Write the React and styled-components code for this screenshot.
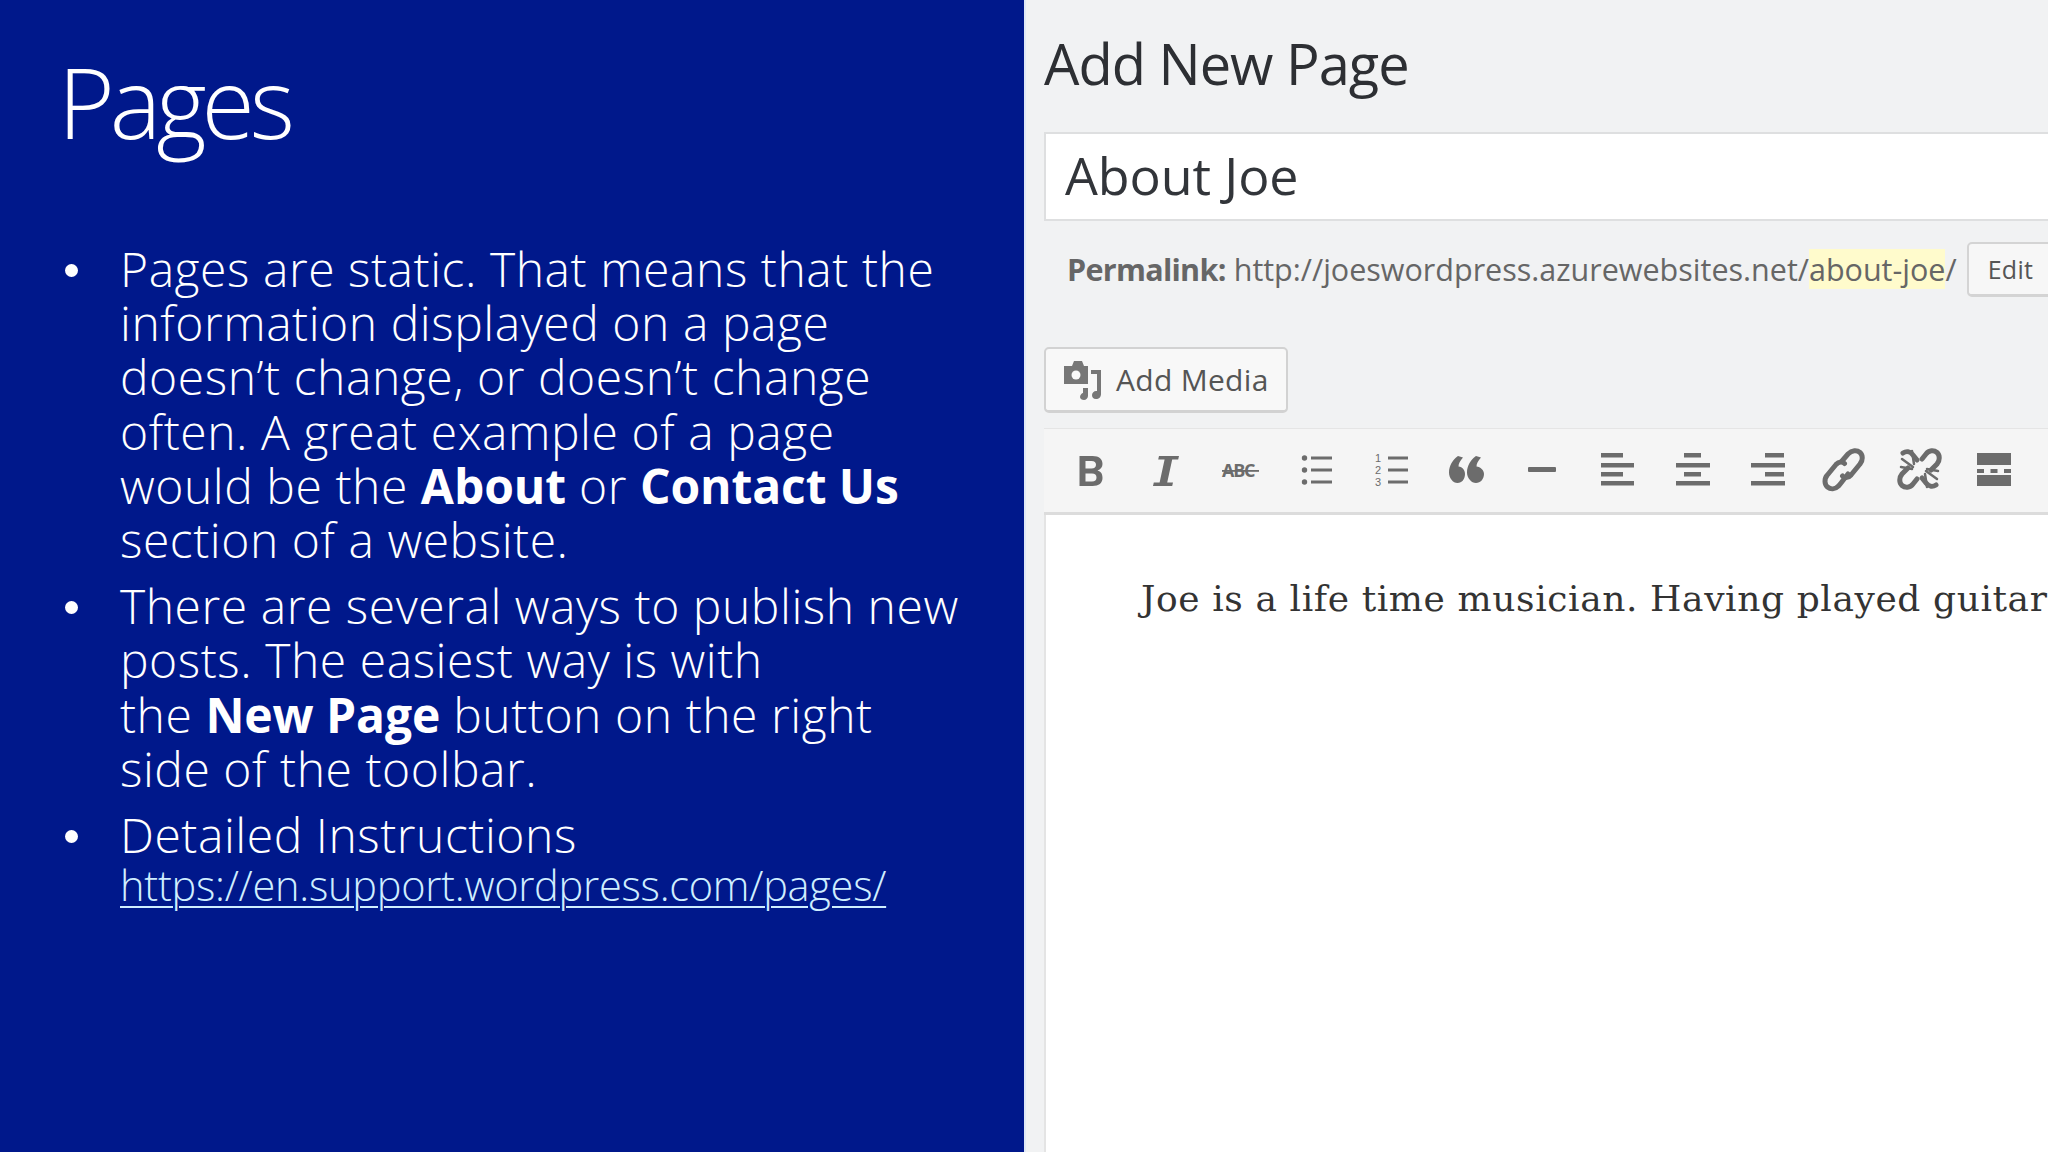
import React from "react";
import styled, { createGlobalStyle } from "styled-components";

const Global = createGlobalStyle`
  html, body { margin: 0; padding: 0; background: #f1f2f3; }
  #root { width: 2048px; height: 1152px; overflow: hidden; }
`;

const Page = styled.div`
  display: grid;
  grid-template-columns: 1024px 1024px;
  width: 2048px;
  height: 1152px;
  overflow: hidden;
`;

const Slide = styled.section`
  background: #00188b;
  color: #fff;
  padding: 39px 0 0 60px;
  font-family: "Open Sans", "Noto Sans", sans-serif;
  overflow: hidden;
`;

const SlideTitle = styled.h1`
  margin: 0 0 0 -2px;
  font-size: 97px;
  line-height: 124px;
  font-weight: 300;
  letter-spacing: -5px;
`;

const Bullets = styled.ul`
  list-style: none;
  margin: 79px 0 0;
  padding: 0;
  display: flex;
  flex-direction: column;
  gap: 12px;
`;

const Bullet = styled.li`
  position: relative;
  padding-left: 60px;
  font-size: 48px;
  line-height: 54.2px;
  font-weight: 300;
  letter-spacing: 0.55px;
  white-space: nowrap;
  &::before {
    content: "";
    position: absolute;
    left: 5px;
    top: 22px;
    width: 13px;
    height: 13px;
    border-radius: 50%;
    background: #fff;
  }
  strong { font-weight: 700; letter-spacing: -0.1px; }
`;

const SlideLink = styled.a`
  display: block;
  margin-top: -4px;
  font-size: 41.5px;
  line-height: 54px;
  color: #cfeeff;
  letter-spacing: -0.25px;
  text-decoration: underline;
  text-decoration-thickness: 2px;
  text-underline-offset: 5px;
`;

const Editor = styled.section`
  position: relative;
  background: #f1f2f3;
  border-left: 2px solid #dfe8f6;
  padding-left: 18px;
  font-family: "Open Sans", "Noto Sans", sans-serif;
  display: flex;
  flex-direction: column;
  overflow: hidden;
`;

const Heading = styled.h2`
  margin: 26px 0 0;
  font-size: 56px;
  line-height: 74px;
  font-weight: 400;
  color: #2d2f33;
  letter-spacing: -1px;
  white-space: nowrap;
`;

const TitleField = styled.div`
  margin-top: 32px;
  height: 85px;
  background: #fff;
  border: 2px solid #dedfe0;
  border-right: 0;
  padding-left: 19px;
  font-size: 52px;
  line-height: 82px;
  color: #32353a;
  letter-spacing: -0.1px;
  white-space: nowrap;
`;

const PermalinkRow = styled.div`
  display: flex;
  align-items: center;
  margin-top: 20px;
  padding-left: 23px;
  height: 56px;
  font-size: 30.5px;
  color: #666;
  letter-spacing: 0;
  white-space: nowrap;
  b { font-weight: 700; margin-right: 8px; letter-spacing: -0.7px; }
`;

const Slug = styled.span`
  background: #fffbcc;
  line-height: 40px;
`;

const SmallButton = styled.span`
  margin-left: 10px;
  flex: none;
  width: 90px;
  height: 55px;
  box-sizing: border-box;
  padding-left: 19px;
  line-height: 50px;
  font-size: 25px;
  letter-spacing: 0.3px;
  color: #555;
  background: #f7f7f7;
  border: 2px solid #d4d4d4;
  border-bottom-width: 3px;
  border-radius: 5px;
`;

const MediaButton = styled.div`
  display: flex;
  align-items: center;
  gap: 14px;
  margin-top: 50px;
  width: 244px;
  height: 66px;
  box-sizing: border-box;
  padding-left: 18px;
  background: #f8f8f8;
  border: 2px solid #d2d2d2;
  border-bottom-width: 3px;
  border-radius: 5px;
  font-size: 30px;
  color: #555;
  letter-spacing: 0.3px;
  white-space: nowrap;
`;

const Toolbar = styled.div`
  display: flex;
  align-items: center;
  margin-top: 15px;
  height: 87px;
  box-sizing: border-box;
  background: #f5f5f5;
  border-top: 1px solid #e5e5e5;
  border-bottom: 3px solid #dcdcdc;
  padding-left: 6px;
`;

const ToolIcon = styled.svg`
  flex: none;
  width: 75.8px;
  height: 46px;
  fill: #6c6c6c;
  stroke: none;
`;

const MediaGlyph = styled.svg`
  flex: none;
  width: 38px;
  height: 40px;
  fill: #777;
`;

const Content = styled.div`
  flex: 1;
  background: #fff;
  border-left: 2px solid #e4e4e4;
  padding: 59px 0 0 95px;
  font-family: "DejaVu Serif", "Liberation Serif", serif;
  font-size: 36px;
  line-height: 50px;
  color: #333;
  letter-spacing: 0.6px;
  white-space: nowrap;
`;

const Bars = ({ rows, h = 4.5 }) => rows.map(([x, y, w], i) => <rect key={i} x={x} y={y} width={w} height={h} />);

const rowsY = [5, 15, 24, 33];
const aligned = (sx, sw, lx, lw) => rowsY.map((y, i) => (i % 2 ? [lx, y, lw] : [sx, y, sw]));

const icons = [
  <path d="M29.500 8h13c7 0 10 3.500 10 8 0 3-2 5.500-5 6.500 3.500.8 5 3.500 5 7.500 0 5-3.500 8-10 8h-13zm6 5v7.500h6c3 0 4.500-1.500 4.500-3.800s-1.500-3.700-4.500-3.700zm0 12.500v8h6.500c3 0 4.500-1.500 4.500-4s-1.500-4-4.500-4z" />,
  <path d="M33 8h20l-.8 3.500h-6l-5 23h5.800l-.8 3.500H27l.8-3.500h5.800l5-23h-6.400z" />,
  <>
    <text x="20" y="29" fontFamily="Open Sans, sans-serif" fontSize="18" fontWeight="700" letterSpacing="-1.2">ABC</text>
    <rect x="20" y="22" width="37" height="1.800" />
  </>,
  <>
    <circle cx="27.500" cy="10" r="2.700" /><circle cx="27.500" cy="22" r="2.700" /><circle cx="27.500" cy="34" r="2.700" />
    <Bars h={3} rows={[[34, 8.500, 21], [34, 20.500, 21], [34, 32.500, 21]]} />
  </>,
  <>
    <text x="22" y="14" fontFamily="Liberation Sans, sans-serif" fontSize="11">1</text>
    <text x="22" y="26" fontFamily="Liberation Sans, sans-serif" fontSize="11">2</text>
    <text x="22" y="38" fontFamily="Liberation Sans, sans-serif" fontSize="11">3</text>
    <Bars h={3} rows={[[35, 8.500, 20], [35, 20.500, 20], [35, 32.500, 20]]} />
  </>,
  <path d="M29 8l5 1.500c-3 3.500-4.500 6-4.500 9 4 .5 6.500 3.500 6.500 7.500 0 5-3 9-7.500 9S20 30 20 24.500C20 18 23.500 12 29 8zm18 0l5 1.500c-3 3.500-4.500 6-4.500 9 4 .5 7.500 3.500 7.500 7.500 0 5-3.500 9-8 9S38 30 38 24.500C38 18 41.500 12 47 8z" />,
  <rect x="23" y="19" width="28" height="5" rx="1" />,
  <Bars rows={aligned(20, 22, 20, 33)} />,
  <Bars rows={aligned(28, 17, 20, 34)} />,
  <Bars rows={aligned(33, 19, 19, 34)} />,
  <g fill="none" stroke="#6c6c6c" strokeWidth="5" strokeLinecap="round">
    <path d="M34 13l6-7c4-4 9-4 12-1.500s3 8 0 11.500l-9 11c-3 3.500-7 3-8.500 1" />
    <path d="M40 26l-7 9-2.500 3c-3.500 3.500-8 3.500-11 1s-3.500-8-.5-11.500l9-11c3-3.500 7-3 8.500-1" />
  </g>,
  <g fill="none" stroke="#6c6c6c" strokeLinecap="round">
    <path strokeWidth="5" d="M38 11l4-5c3-4 8-4 11-1.500s3 8 0 11.500l-6 6M33 31l-4 5c-3 4-8 4-11 1.500s-3-8 0-11.500l6-6" />
    <path strokeWidth="5" d="M33 12l-4-5c-3-4-7-4-10-2M38 30l4 5c3 4 7 4 10 2" />
    <path strokeWidth="2.500" d="M18 11l11 8M17 19l11 2M28 3l2 13M53 31l-11-8M54 23l-11-2M43 39l-2-13" />
  </g>,
  <>
    <rect x="17" y="5" width="34" height="12" />
    <rect x="17" y="21" width="7" height="4" /><rect x="30.500" y="21" width="7" height="4" /><rect x="44" y="21" width="7" height="4" />
    <rect x="17" y="27" width="34" height="11" />
  </>,
];

const MediaIcon = () => (
  <MediaGlyph viewBox="0 0 38 40">
    <path d="M0 6h8l2-5h8l2 5h4v18H0z" />
    <circle cx="12" cy="15" r="4.500" fill="#f8f8f8" />
    <path d="M27 10h10v24c0 3-2 5-5 5s-4-2-4-4 2-4 4-4h1V14h-6z" />
    <path d="M19 28h5v8c0 2-2 4-4 4s-4-1-4-3 2-4 3-4z" />
  </MediaGlyph>
);

export default function App() {
  return (
    <Page>
      <Global />
      <Slide>
        <SlideTitle>Pages</SlideTitle>
        <Bullets>
          <Bullet>
            Pages are static. That means that the<br />
            information displayed on a page<br />
            doesn’t change, or doesn’t change<br />
            often. A great example of a page<br />
            would be the <strong>About</strong> or <strong>Contact Us</strong><br />
            section of a website.
          </Bullet>
          <Bullet>
            There are several ways to publish new<br />
            posts. The easiest way is with<br />
            the <strong>New Page</strong> button on the right<br />
            side of the toolbar.
          </Bullet>
          <Bullet>
            Detailed Instructions
            <SlideLink href="#">https://en.support.wordpress.com/pages/</SlideLink>
          </Bullet>
        </Bullets>
      </Slide>
      <Editor>
        <Heading>Add New Page</Heading>
        <TitleField>About Joe</TitleField>
        <PermalinkRow>
          <b>Permalink:</b> http://joeswordpress.azurewebsites.net/<Slug>about-joe</Slug>/
          <SmallButton>Edit</SmallButton>
        </PermalinkRow>
        <MediaButton><MediaIcon />Add Media</MediaButton>
        <Toolbar>
          {icons.map((icon, i) => (
            <ToolIcon key={i} viewBox="0 0 75.8 46">{icon}</ToolIcon>
          ))}
        </Toolbar>
        <Content>Joe is a life time musician. Having played guitar</Content>
      </Editor>
    </Page>
  );
}
